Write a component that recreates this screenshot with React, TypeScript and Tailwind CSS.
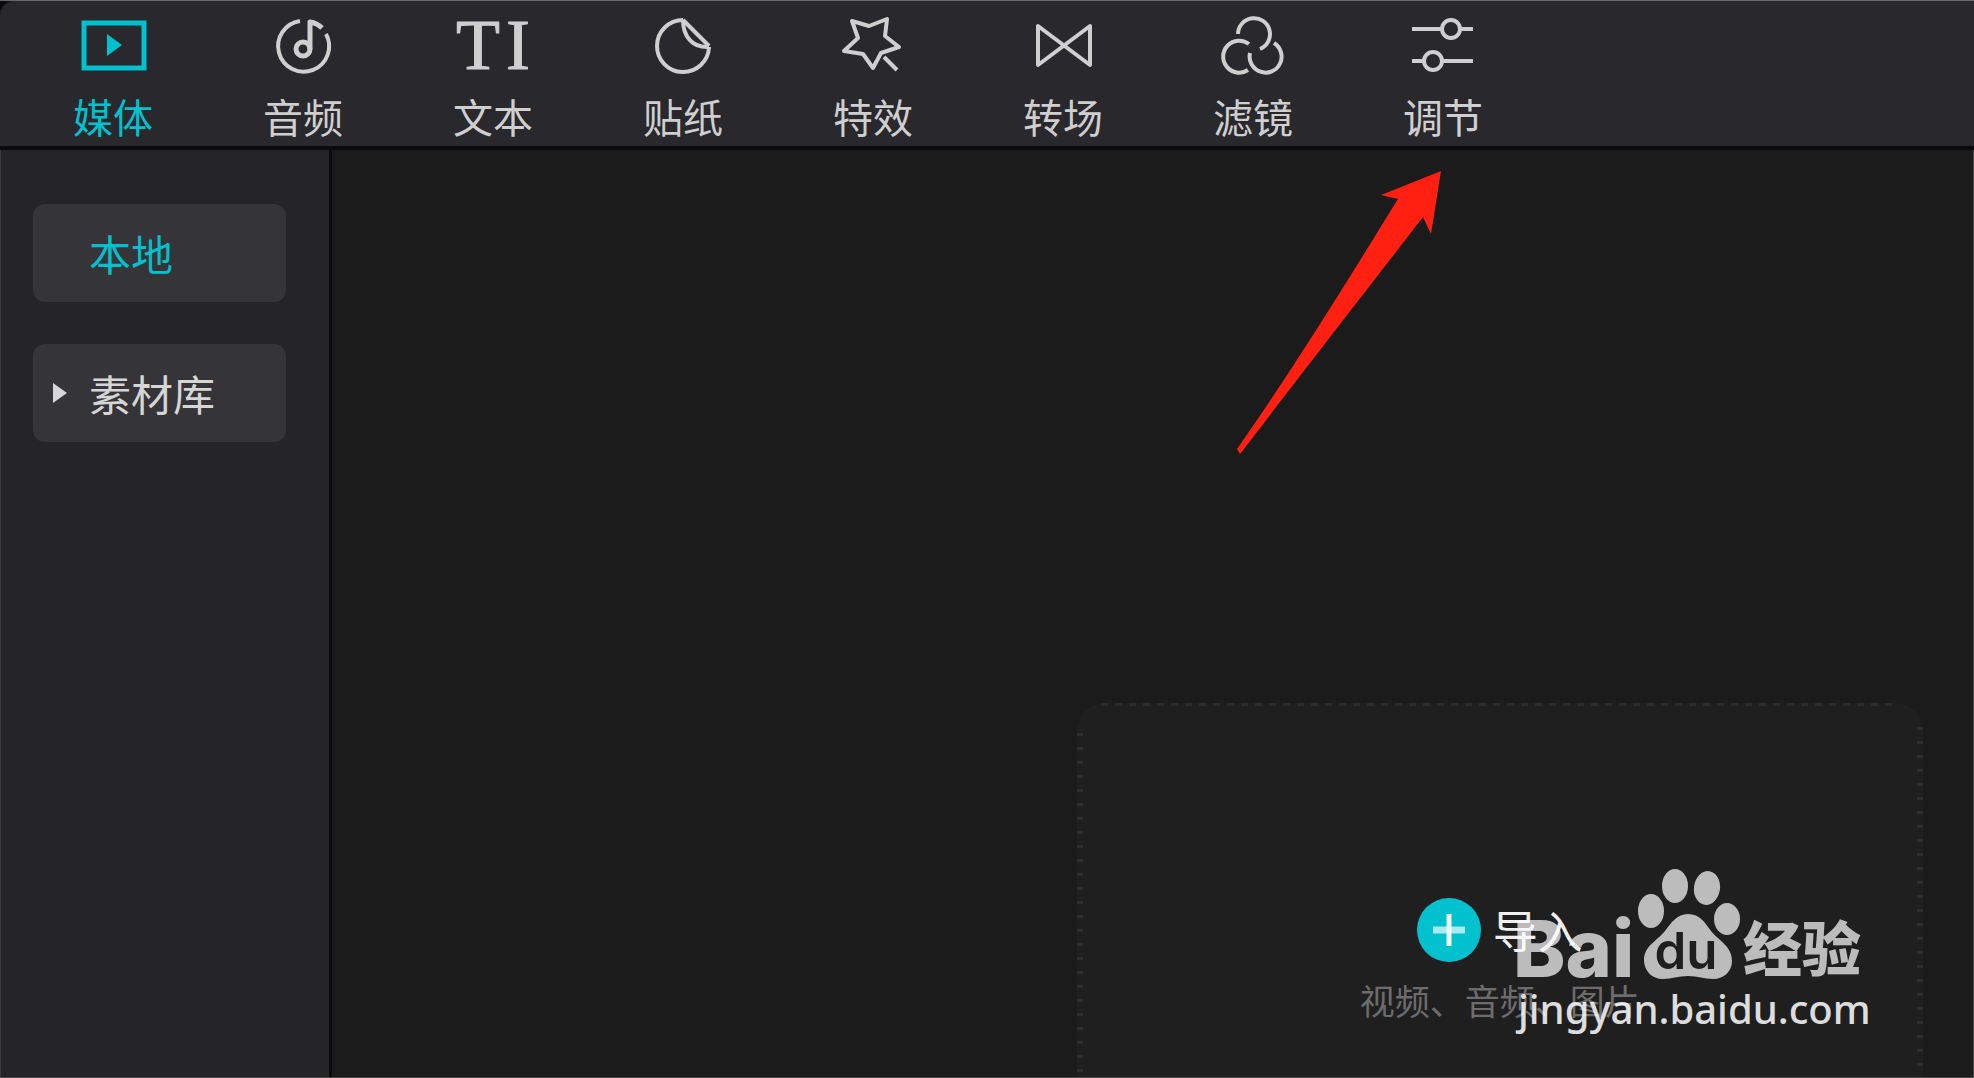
import type { ReactNode } from "react";

type Tab = { label: string; icon: ReactNode };

const tabs: Tab[] = [
  {
    label: "媒体",
    icon: (
      <>
        <rect x="11" y="7" width="60" height="45" strokeWidth="5" strokeLinejoin="miter" />
        <path d="M34 18 L49 29 L34 40 Z" fill="currentColor" stroke="none" />
      </>
    ),
  },
  {
    label: "音频",
    icon: (
      <>
        <path d="M63 18 A25.500 25.500 0 1 1 37 5" />
        <circle cx="40" cy="33" r="7" strokeWidth="5" />
        <path d="M47 33 V6 Q54 7 59 12" strokeWidth="5" />
      </>
    ),
  },
  {
    label: "文本",
    icon: (
      <g
        fill="currentColor"
        strokeWidth="1"
        textAnchor="middle"
        fontSize="72"
        className="font-['Liberation_Serif',serif]"
      >
        <text x="25" y="53">T</text>
        <text x="65" y="53">I</text>
      </g>
    ),
  },
  {
    label: "贴纸",
    icon: (
      <>
        <path d="M40 4 A26 26 0 1 0 66 31" />
        <path d="M40 4 L66 30" />
        <path d="M40 4 C40 20 49 32 66 31" />
      </>
    ),
  },
  {
    label: "特效",
    icon: (
      <>
        <path d="M19 5 L36 10 L54 3 L52 20 L66 31 L48 37 L40 52 L30 38 L11 35 L25 22 Z" />
        <path d="M51 41 L64 54" />
      </>
    ),
  },
  { label: "转场", icon: <path d="M15 10 V49 L67 10 V49 Z" /> },
  {
    label: "滤镜",
    icon: (
      <>
        <path d="M25 18 A16 16 0 1 1 47 33" />
        <path d="M36 28 A16 16 0 1 0 35 54" />
        <path d="M37 37 A16 16 0 1 0 61 27" />
      </>
    ),
  },
  {
    label: "调节",
    icon: (
      <>
        <path d="M9 13 H38 M58 13 H70 M9 45 H20 M40 45 H70" />
        <circle cx="48" cy="13" r="9" />
        <circle cx="30" cy="45" r="9" />
      </>
    ),
  },
];

function TopBar() {
  return (
    <header className="border-t border-b-4 border-t-[#67696c] border-b-[#0b0b0c] bg-[#29282d] bg-[radial-gradient(circle_at_14px_14px,transparent_13px,#0b0b0c_15px)] bg-[length:14px_14px] bg-no-repeat">
      <nav className="flex pt-[15px] pb-[10px] pl-[18px]">
        {tabs.map((tab, i) => (
          <button
            key={tab.label}
            type="button"
            className={
              i === 0
                ? "flex w-[190px] flex-col items-center gap-5 text-[#00c1cd]"
                : "flex w-[190px] flex-col items-center gap-5 text-[#cfcfcf]"
            }
          >
            <svg
              aria-hidden="true"
              viewBox="0 0 80 60"
              className="h-[60px] w-20 overflow-visible"
              fill="none"
              stroke="currentColor"
              strokeWidth="4"
              strokeLinejoin="round"
            >
              {tab.icon}
            </svg>
            <span className="text-[40px] leading-[40px]">{tab.label}</span>
          </button>
        ))}
      </nav>
    </header>
  );
}

function Sidebar() {
  return (
    <aside className="flex w-[332px] shrink-0 flex-col gap-[42px] border-r-[3px] border-l border-r-[#0b0b0c] border-l-[#3b3b3d] bg-[#252527] pt-[54px] pr-[43px] pl-8">
      <button
        type="button"
        className="flex h-[98px] items-center rounded-xl bg-[#353438] pl-14 text-[42px] leading-[42px] text-[#00c1cd]"
      >
        本地
      </button>
      <button
        type="button"
        className="flex h-[98px] items-center gap-[22px] rounded-xl bg-[#353438] pl-5 text-[42px] leading-[42px] text-[#d6d6d6]"
      >
        <svg aria-hidden="true" viewBox="0 0 14 20" className="h-5 w-[14px]" fill="currentColor">
          <path d="M0 0 L14 10 L0 20 Z" />
        </svg>
        素材库
      </button>
    </aside>
  );
}

function DropZone() {
  return (
    <section className="relative col-start-2 flex flex-col items-center rounded-t-[28px] bg-[#1f1f1f] pt-[195px]">
      <span className="absolute inset-x-6 top-0 h-[3px] bg-[repeating-linear-gradient(to_right,#2b2b2b_0_7px,transparent_7px_14px)]" />
      <span className="absolute top-7 bottom-0 left-0 w-[6px] bg-[repeating-linear-gradient(to_bottom,transparent_0_2px,#2e2e2e_2px_5px,transparent_5px_14px)]" />
      <span className="absolute top-6 right-0 bottom-0 w-[6px] bg-[repeating-linear-gradient(to_bottom,#2e2e2e_0_3px,transparent_3px_14px)]" />
      <button type="button" className="flex items-center gap-3 text-[45px] leading-[64px] text-[#f0f0f0]">
        <svg aria-hidden="true" viewBox="0 0 64 64" className="size-16">
          <circle cx="32" cy="32" r="32" fill="#00c1cd" />
          <path d="M16 32 H48" stroke="#a9eaee" strokeWidth="7" />
          <path d="M32 16 V48" stroke="#f2fdfd" strokeWidth="5" />
        </svg>
        导入
      </button>
      <p className="mt-5 text-[35px] leading-[36px] text-[#6c6c6c]">视频、音频、图片</p>
    </section>
  );
}

function Arrow() {
  return (
    <svg
      aria-hidden="true"
      viewBox="0 0 206 286"
      className="absolute top-[170px] left-[1236px] h-[286px] w-[206px]"
      fill="#ff2012"
    >
      <path d="M205 1 L145 25 L162 29 C124 90 70 180 1 279 L4 284 C80 185 140 108 187 47 L195 64 Z" />
    </svg>
  );
}

function Watermark() {
  return (
    <svg
      role="img"
      aria-label="Baidu 经验 jingyan.baidu.com"
      viewBox="0 0 360 176"
      className="absolute right-[102px] bottom-[36px] h-[176px] w-[360px] overflow-visible"
      fill="#ffffff"
    >
      <g opacity="0.7">
        <text x="1" y="111" fontSize="79" className="font-['Inter',sans-serif] font-extrabold">
          Bai
        </text>
        <ellipse cx="139" cy="45" rx="13" ry="17" />
        <ellipse cx="163" cy="20" rx="13" ry="17" />
        <ellipse cx="195" cy="22" rx="13" ry="17" transform="rotate(8 195 22)" />
        <ellipse cx="215" cy="53" rx="13" ry="16" />
        <path d="M176 48 C188 48 193 57 199 65 C207 75 220 80 220 95 C220 106 211 113 201 113 C192 113 186 110 176 110 C166 110 160 113 151 113 C140 113 132 105 132 94 C132 80 145 75 153 65 C159 57 165 48 176 48 Z" />
        <text x="231" y="105" fontSize="59" className="font-['Noto_Sans_CJK_SC',sans-serif] font-black">
          经验
        </text>
      </g>
      <text
        x="174"
        y="103"
        textAnchor="middle"
        fontSize="51"
        fill="#1f1f1f"
        className="font-['Inter',sans-serif] font-semibold"
      >
        du
      </text>
      <text x="6" y="158" fontSize="40" opacity="0.85" className="font-['Noto_Sans',sans-serif] font-medium">
        jingyan.baidu.com
      </text>
    </svg>
  );
}

export default function App() {
  return (
    <div className="relative flex min-h-screen flex-col overflow-hidden bg-[#1b1b1b] font-['Noto_Sans_CJK_SC',sans-serif]">
      <TopBar />
      <div className="flex flex-1 border-b border-b-[#4a4748]">
        <Sidebar />
        <main className="grid flex-1 grid-cols-[745fr_847fr_50fr] border-r border-r-[#4a4a4a] pt-[553px]">
          <DropZone />
        </main>
      </div>
      <Arrow />
      <Watermark />
    </div>
  );
}
